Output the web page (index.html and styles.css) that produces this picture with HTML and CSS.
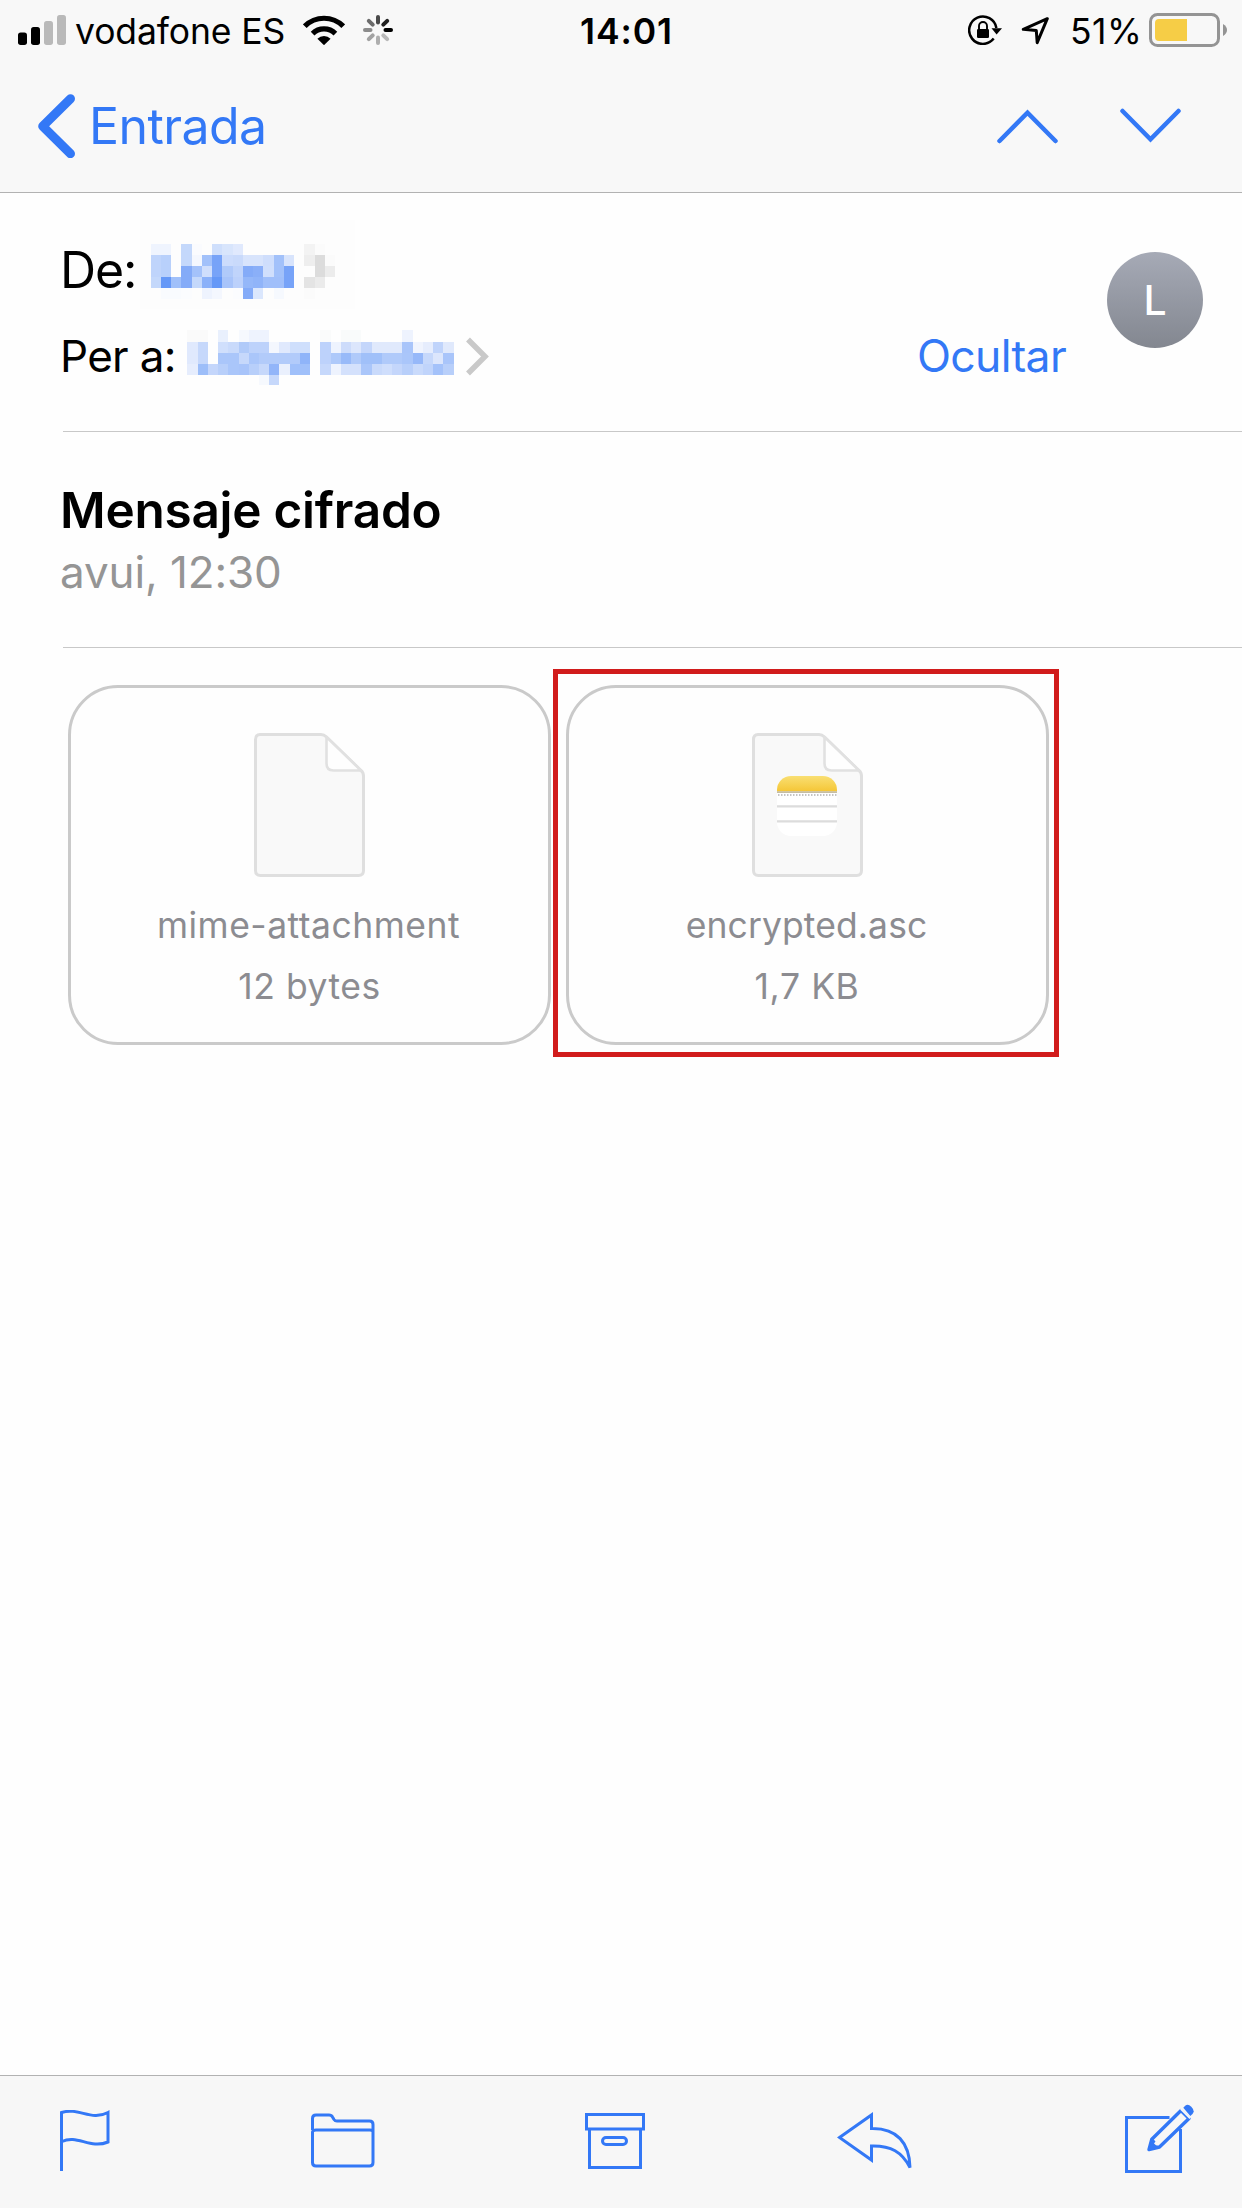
FILE: index.html
```html
<!DOCTYPE html>
<html lang="ca">
<head>
<meta charset="utf-8">
<title>Mensaje cifrado</title>
<link rel="stylesheet" href="styles.css">
</head>
<body>
<div class="screen">
  <header class="header">
    <div class="status">
      <div class="status-left">
        <svg class="signal" width="48" height="31" viewBox="0 0 48 31">
          <rect x="0" y="17.500" width="9" height="12.500" rx="2.700"/>
          <rect x="13" y="12" width="9" height="18" rx="2.700"/>
          <rect x="26" y="6" width="9" height="24" rx="2.700" fill="#b9b9b9"/>
          <rect x="39" y="0" width="9" height="30" rx="2.700" fill="#b9b9b9"/>
        </svg>
        <span class="carrier">vodafone ES</span>
        <svg width="42" height="30" viewBox="0 0 42 30">
          <g fill="none" stroke="#000" stroke-width="5.200">
            <path d="M1.800 11.200a27.200 27.200 0 0 1 38.400 0"/>
            <path d="M9.600 18.600a16.100 16.100 0 0 1 22.800 0"/>
          </g>
          <path d="M14.400 23.800a9.300 9.300 0 0 1 13.200 0L21 30.200z"/>
        </svg>
        <svg class="spinner" width="30" height="30" viewBox="-15 -15 30 30" stroke-width="4" stroke-linecap="round">
          <path d="M0-7.500V-13" stroke="#4a4a4a"/>
          <path d="M5.300-5.300 9.200-9.200" stroke="#202020"/>
          <path d="M7.500 0H13" stroke="#000"/>
          <path d="M5.300 5.300 9.200 9.200" stroke="#b9b9b9"/>
          <path d="M0 7.500V13" stroke="#aeaeae"/>
          <path d="M-5.300 5.300-9.200 9.200" stroke="#a2a2a2"/>
          <path d="M-7.500 0H-13" stroke="#8c8c8c"/>
          <path d="M-5.300-5.300-9.200-9.200" stroke="#6c6c6c"/>
        </svg>
      </div>
      <span class="clock">14:01</span>
      <div class="status-right">
        <svg class="lock" width="34" height="30" viewBox="0 0 34 30">
          <path d="M25.700 23.600A13.700 13.700 0 1 1 28.400 13" fill="none" stroke="#000" stroke-width="2.500"/>
          <path d="M23.500 13.300H34L28.600 19.500z"/>
          <rect x="9" y="14" width="12" height="9" rx="1.300"/>
          <path d="M11 14.500V11a4 4 0 0 1 8 0v3.500" fill="none" stroke="#000" stroke-width="1.900"/>
        </svg>
        <svg class="location" width="28" height="30" viewBox="0 0 28 30">
          <path d="M26.300 3.700 2.300 14.300l13 1.200.9 12.200z" fill="none" stroke="#000" stroke-width="3" stroke-linejoin="round"/>
        </svg>
        <span class="percent">51%</span>
        <svg width="79" height="34" viewBox="0 0 79 34">
          <rect x="1.500" y="1.500" width="68" height="31" rx="7" fill="none" stroke="#949494" stroke-width="3"/>
          <path d="M38 6v22H10a4 4 0 0 1-4-4V10a4 4 0 0 1 4-4z" fill="#f6cd46"/>
          <path d="M74 11q4 2.500 4 6t-4 6z" fill="#949494"/>
        </svg>
      </div>
    </div>
    <nav class="nav">
      <a class="back">
        <svg width="38" height="64" viewBox="0 0 38 64"><path d="M32.500 4.700 4.700 32.200 32.500 59.700" fill="none" stroke="#3378f6" stroke-width="9" stroke-linecap="round" stroke-linejoin="round"/></svg>
        <span class="back-label">Entrada</span>
      </a>
      <div class="arrows">
        <svg width="62" height="36" viewBox="0 0 62 36"><path d="M2.500 33 30.500 4.700 58.500 33"/></svg>
        <svg width="62" height="36" viewBox="0 0 62 36"><path d="M2.500 3 30.500 31.300 58.500 3"/></svg>
      </div>
    </nav>
  </header>

  <main class="message">
    <section class="people">
      <div class="lines">
        <div class="line from">
          <span class="from-label">De:</span>
          <svg class="mosaic" id="from-name" width="215" height="89" viewBox="0 0 215 89" shape-rendering="crispEdges"></svg>
        </div>
        <div class="line to">
          <span class="to-label">Per a:</span>
          <svg class="mosaic to-mosaic" id="to-name" width="268" height="55" viewBox="0 0 268 55" shape-rendering="crispEdges"></svg>
          <svg class="chevron" width="26" height="40" viewBox="0 0 26 40"><path d="M3 2.500 20 19.500 3 36.500" fill="none" stroke="#c9c9c9" stroke-width="5.500"/></svg>
          <a class="hide">Ocultar</a>
        </div>
      </div>
      <div class="avatar">L</div>
    </section>

    <section class="subject">
      <h1 class="title">Mensaje cifrado</h1>
      <p class="date">avui, 12:30</p>
    </section>

    <section class="attachments">
      <article class="card">
        <svg class="file" width="111" height="144" viewBox="0 0 111 144">
          <path class="paper" d="M6 1.500H67Q70 1.500 72.500 4L107 37.500Q109.500 39.500 109.500 43V137.500Q109.500 142.500 104.500 142.500H6.500Q1.500 142.500 1.500 137.500V6.500Q1.500 1.500 6 1.500z"/>
          <path class="fold" d="M72.500 4V30.500Q72.500 37.500 79.500 37.500H107z"/>
        </svg>
        <span class="name mime">mime-attachment</span>
        <span class="size bytes">12 bytes</span>
      </article>
      <article class="card marked">
        <svg class="file" width="111" height="144" viewBox="0 0 111 144">
          <defs>
            <linearGradient id="pad" x2="0" y2="1"><stop offset="0" stop-color="#f9df73"/><stop offset="1" stop-color="#f5c636"/></linearGradient>
            <clipPath id="tile"><rect x="25" y="43" width="60" height="60" rx="14"/></clipPath>
          </defs>
          <path class="paper" d="M6 1.500H67Q70 1.500 72.500 4L107 37.500Q109.500 39.500 109.500 43V137.500Q109.500 142.500 104.500 142.500H6.500Q1.500 142.500 1.500 137.500V6.500Q1.500 1.500 6 1.500z"/>
          <path class="fold" d="M72.500 4V30.500Q72.500 37.500 79.500 37.500H107z"/>
          <g clip-path="url(#tile)">
            <path d="M25 43h60v60H25z" fill="#fff"/>
            <path d="M25 43h60v15.500H25z" fill="url(#pad)"/>
            <path d="M25 59.200h60" stroke="#c5bda3" stroke-width="1.800"/>
            <path d="M26 62h59" stroke="#c4c4c4" stroke-width="2" stroke-dasharray="1.500 1.500"/>
            <path d="M25 73.300h60M25 88.300h60" stroke="#dcdcdc" stroke-width="2.200"/>
          </g>
        </svg>
        <span class="name asc">encrypted.asc</span>
        <span class="size kb">1,7 KB</span>
      </article>
    </section>
  </main>

  <footer class="toolbar">
    <svg class="flag" width="50" height="62" viewBox="0 0 50 62"><path d="M1.500 61V2.500C19-3 31 11.500 48 2.500V32C30 39.500 17 24 2 31.500"/></svg>
    <svg class="folder" width="64" height="56" viewBox="0 0 64 56"><path d="M1.500 17V5.500Q1.500 2 5 2H18Q20.500 2 21.500 4L23 6.500Q24 8 26 8H58.500Q62 8 62 11.500V49.500Q62 53 58.500 53H5Q1.500 53 1.500 49.500V19Q2 17 5 17H59Q62 17 62 19"/></svg>
    <svg class="archive" width="60" height="58" viewBox="0 0 60 58"><path d="M1.500 1.500H58.500V16H1.500zM4.500 16V54.500H55.500V16"/><rect x="17.500" y="24.500" width="24" height="7" rx="3.500"/></svg>
    <svg class="reply" width="76" height="60" viewBox="0 0 76 60"><path d="M2.500 25.500 34.500 3V16.500C60 16 72.500 31 73 55.500C65 40 54 33.500 34.500 34V48z"/></svg>
    <svg class="compose" width="70" height="72" viewBox="0 0 70 72">
      <path d="M44.500 14.500H1.500V68.500H55.500V26"/>
      <path class="pencil" d="M24 46.500 26.800 36.200 56 7.500 64 15.500 34.500 44z" />
      <path class="solid" d="M23 47 27.300 35 30.500 38.500 29 40.500 31 42.300 34.500 43.500z"/>
      <path class="solid" d="M58.300 4.700 60.200 2.800Q63 .5 66.300 3.800Q70.300 8 67.500 10.900L65.300 13z"/>
      <path class="gap" d="M55.800 5.800 65.200 15.200"/>
    </svg>
  </footer>
</div>
<script src="mosaic.js"></script>
</body>
</html>
```
FILE: styles.css
```css
* { box-sizing: border-box; }
body { margin: 0; }
svg { display: block; flex: none; }

.screen {
  display: flex;
  flex-direction: column;
  width: 1242px;
  height: 2208px;
  background: #fefefe;
  color: #000;
  font-family: Inter, "Liberation Sans", sans-serif;
  font-size: 35.5px;
  white-space: nowrap;
  overflow: hidden;
}

.header { background: #f8f8f8; border-bottom: 1px solid #b2b2b2; }

.status {
  display: grid;
  grid-template-columns: 580px 388px 1fr;
  align-items: center;
  height: 63px;
  line-height: 63px;
}
.status-left, .status-right { display: flex; align-items: center; height: 60px; margin-bottom: 3px; }
.status-left { padding-left: 18px; }
.carrier { width: 228px; margin-left: 9px; padding-top: 2px; letter-spacing: -.1px; }
.spinner { margin-left: 18px; }
.clock { font-weight: 600; letter-spacing: .9px; }
.location { margin-left: 19px; }
.percent { width: 79px; margin-left: 21px; padding-top: 2px; letter-spacing: .49px; }

.nav {
  display: flex;
  align-items: center;
  justify-content: space-between;
  height: 129px;
  padding: 0 60px 3px 38px;
  color: #3378f6;
}
.back { display: flex; align-items: center; }
.back-label { margin-left: 13px; font-size: 50px; letter-spacing: -.58px; }
.arrows { display: flex; gap: 61px; fill: none; stroke: #3378f6; stroke-width: 4.5; stroke-linecap: round; }

.message { flex: 1; }

.people {
  display: flex;
  margin-left: 63px;
  padding: 27px 39px 38px 0;
  border-bottom: 1px solid #c8c8c8;
}
.lines { flex: 1; padding-right: 41px; }
.line { display: flex; align-items: center; }
.from { height: 100px; font-size: 50px; }
.from-label { width: 80px; margin-left: -3px; letter-spacing: -1.12px; }
.from .mosaic { margin-bottom: 11px; }
.to { height: 73px; font-size: 44px; }
.to-label { width: 127px; margin-left: -3px; padding-bottom: 1px; letter-spacing: -.7px; }
.to-mosaic { margin-top: 2px; }
.chevron { margin-left: 10px; }
.hide { margin-left: auto; padding-bottom: 1px; color: #3378f6; font-size: 44.5px; letter-spacing: -.66px; }

.avatar {
  width: 96px;
  height: 96px;
  margin-top: 32px;
  border-radius: 50%;
  background: linear-gradient(#a6aab6, #838790);
  color: #fff;
  font-size: 41px;
  font-weight: 500;
  line-height: 97px;
  text-align: center;
}

.subject {
  height: 216px;
  margin-left: 63px;
  padding-top: 47px;
  border-bottom: 1px solid #c8c8c8;
}
.title { margin: 0 0 0 -3px; font-size: 49.5px; font-weight: 600; line-height: 62px; letter-spacing: -.25px; }
.date { margin: 0 0 0 -3px; color: #959595; font-size: 44px; line-height: 62px; letter-spacing: -.1px; }

.attachments { display: flex; gap: 15px; padding: 37px 0 0 68px; }
.card {
  position: relative;
  display: flex;
  flex-direction: column;
  align-items: center;
  width: 483px;
  height: 360px;
  padding-top: 45px;
  border: 3px solid #cacaca;
  border-radius: 50px;
  color: #8c8c91;
}
.marked::after {
  content: "";
  position: absolute;
  inset: -19px -13px -15px -16px;
  border: 5px solid #d11c1c;
}
.name { margin: 18px 2px 0 0; line-height: 62px; }
.size { line-height: 60px; }
.mime { letter-spacing: .48px; }
.bytes { letter-spacing: .5px; }
.asc { letter-spacing: .1px; }
.kb { margin-right: 1px; letter-spacing: .58px; }

.paper { fill: #f9f9f9; stroke: #dfdfdf; stroke-width: 3; }
.fold { fill: #fefefe; stroke: #e1e1e1; stroke-width: 2.6; stroke-linejoin: round; }

.toolbar {
  display: flex;
  align-items: center;
  height: 133px;
  padding: 0 47px 2px 60px;
  border-top: 1px solid #b2b2b2;
  background: #f7f7f7;
  fill: none;
  stroke: #3378f6;
  stroke-width: 3;
}
.folder { margin-left: 201px; }
.archive { margin: 2px 0 0 210px; }
.reply { margin: 2px 0 0 192px; }
.compose { margin: 0 0 4px auto; }
.pencil { fill: #f7f7f7; stroke-width: 3.4; stroke-linejoin: round; }
.solid { fill: #3378f6; stroke: none; }
.gap { stroke: #f7f7f7; stroke-width: 2; }
```
FILE: mosaic.js
```js
// Censored names: each row lists its cell colours, "-" leaves a cell empty.
const names = {
  'from-name': {
    x: 10.7, ys: [24, 35, 46, 57, 68, 79], back: '#fdfdfd', rows: [
      'eff4fe eff4fe - c4d8fb fafbfe - cfdffc d8e5fc e0e9fd - - - - - - f3f3f3 fbfbfb',
      'bfd4fb b8d0fb - c4d8fb f4f7fe a2c1fa 77a3f8 ccdcfc c9dafb d8e4fc d8e4fc cfdefc a2c1fa d8e4fc - eeeeee dcdcdc fbfbfb',
      'bfd4fb b8d0fb - 84abf8 a4c2fa cfdefc 77a3f8 b0cafa c0d4fb 84abf8 8aaff8 d0dffc a2c1fa 77a3f8 - - dcdcdc ececec',
      'c4d8fb 6598f7 a0c0fa 84abf8 c4d8fb 8bb1f9 6598f7 a8c4fa bcd1fb 94b7f9 90b4f9 a0bffa a0bffa 77a3f8 - e4e4e4 ebebeb',
      '- f9fbfe f9fbfe fbfcfe - eef3fe f4f7fe - fbfcfe 84abf8 dbe7fd - f6f9fe - - fbfbfb'
    ]
  },
  'to-name': {
    x: 0.3, ys: [0, 11.5, 22.7, 33.7, 45, 55], back: 'none', rows: [
      'fafafa fafafa - e9f0fd - f6f9fe eef3fe eef3fe - - - - - fafbfb - f9fbfb f9fbfb - - - - eef3fe',
      'e0e9fd c6d8fb - d0dffc c9dafb b0caf9 bdd2fb bdd2fb f4f7fe e0e9fd cfdffc cfdffc - bdd2fb eef3fe cddcfb dce6fc c4d6fb e0e9fc e0e9fc e0e9fc a9c5fa f0f4fe e6edfd c0d4fb e0e9fc',
      'e0e9fd c6d8fb - aac6fa aac6fa c6d8fb aac6fa b2cbfa b2cbfa b2cbfa b2cbfa 8fb4f9 - bdd2fb aec9fa 98baf9 b0cafa a0c0f9 a0c0f9 b0cafa b0cafa aac6fa 96b8f9 c6d8fb dce6fc a9c5fa',
      'e6edfd 9dbef9 c4d6fb b8cffa aac6fa a8c4fa b8cffa c6d8fb 92b5f9 eaf0fd a0c0fa a0c0fa - c6d8fb eef3fe d4e1fc d4e1fc aac6fa c9dafb cfdefc c4d6fb b8cffa c9dafb c0d4fb a4c2fa b8cffa',
      '- - - - - - - f6f9fe c6d8fb'
    ]
  }
};
const STEP = 10.24;
for (const [id, { x, ys, back, rows }] of Object.entries(names)) {
  let cells = `<rect width="100%" height="100%" fill="${back}"/>`;
  rows.forEach((row, r) => row.split(' ').forEach((color, c) => {
    if (color === '-') return;
    cells += `<rect x="${x + c * STEP}" y="${ys[r]}" width="${STEP}" height="${ys[r + 1] - ys[r]}" fill="#${color}"/>`;
  }));
  document.getElementById(id).innerHTML = cells;
}
```
